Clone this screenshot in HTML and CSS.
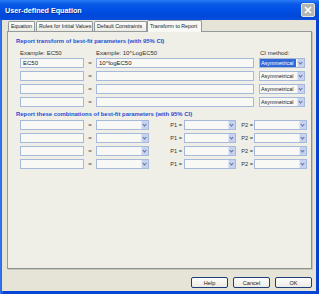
FILE: index.html
```html
<!DOCTYPE html>
<html>
	<head>
		<meta charset="UTF-8">
		<title>User-defined Equation</title>
		<link rel="stylesheet" href="styles.css">
	</head>
	<body>
		<div class="window">
			<div class="titlebar">
				<span class="title">User-defined Equation</span>
				<span class="close">
					<svg width="12" height="12" viewBox="0 0 12 12"><path d="M3 3L9 9M9 3L3 9" stroke="#fff" stroke-width="1.6"/></svg>
				</span>
			</div>
			<div class="client">
				<ul class="tabs">
					<li class="tab">Equation</li>
					<li class="tab">Rules for Initial Values</li>
					<li class="tab">Default Constraints</li>
					<li class="tab active">Transform to Report</li>
				</ul>
				<div class="panel">
					<h2 class="heading">Report transform of best-fit parameters (with 95% CI)</h2>
					<div class="labels">
						<span class="lab-left">Example: EC50</span>
						<span class="lab-mid">Example: 10^LogEC50</span>
						<span class="lab-right">CI method:</span>
					</div>
					<div class="trow">
						<div class="field w-left">EC50</div><span class="eq">=</span><div class="field w-expr">10^logEC50</div>
						<div class="combo w-ci"><span class="val sel">Asymmetrical</span><span class="btn"></span></div>
					</div>
					<div class="trow">
						<div class="field w-left"></div><span class="eq">=</span><div class="field w-expr"></div>
						<div class="combo w-ci"><span class="val">Asymmetrical</span><span class="btn"></span></div>
					</div>
					<div class="trow">
						<div class="field w-left"></div><span class="eq">=</span><div class="field w-expr"></div>
						<div class="combo w-ci"><span class="val">Asymmetrical</span><span class="btn"></span></div>
					</div>
					<div class="trow">
						<div class="field w-left"></div><span class="eq">=</span><div class="field w-expr"></div>
						<div class="combo w-ci"><span class="val">Asymmetrical</span><span class="btn"></span></div>
					</div>

					<h2 class="heading second">Report these combinations of best-fit parameters (with 95% CI)</h2>
					<div class="crow">
						<div class="field w-left"></div><span class="eq">=</span>
						<div class="combo w-fn"><span class="val"></span><span class="btn"></span></div>
						<span class="plab p1">P1 =</span>
						<div class="combo w-p1"><span class="val"></span><span class="btn"></span></div>
						<span class="plab p2">P2 =</span>
						<div class="combo w-p2"><span class="val"></span><span class="btn"></span></div>
					</div>
					<div class="crow">
						<div class="field w-left"></div><span class="eq">=</span>
						<div class="combo w-fn"><span class="val"></span><span class="btn"></span></div>
						<span class="plab p1">P1 =</span>
						<div class="combo w-p1"><span class="val"></span><span class="btn"></span></div>
						<span class="plab p2">P2 =</span>
						<div class="combo w-p2"><span class="val"></span><span class="btn"></span></div>
					</div>
					<div class="crow">
						<div class="field w-left"></div><span class="eq">=</span>
						<div class="combo w-fn"><span class="val"></span><span class="btn"></span></div>
						<span class="plab p1">P1 =</span>
						<div class="combo w-p1"><span class="val"></span><span class="btn"></span></div>
						<span class="plab p2">P2 =</span>
						<div class="combo w-p2"><span class="val"></span><span class="btn"></span></div>
					</div>
					<div class="crow">
						<div class="field w-left"></div><span class="eq">=</span>
						<div class="combo w-fn"><span class="val"></span><span class="btn"></span></div>
						<span class="plab p1">P1 =</span>
						<div class="combo w-p1"><span class="val"></span><span class="btn"></span></div>
						<span class="plab p2">P2 =</span>
						<div class="combo w-p2"><span class="val"></span><span class="btn"></span></div>
					</div>
				</div>
				<div class="buttons">
					<button class="button">Help</button>
					<button class="button">Cancel</button>
					<button class="button">OK</button>
				</div>
			</div>
		</div>
	</body>
</html>
```
FILE: styles.css
```css
* {
	margin: 0;
	padding: 0;
	box-sizing: border-box;
}

body {
	font-family: "Liberation Sans", Arial, sans-serif;
	font-size: 6px;
	color: #222;
	background: #fff;
}

.window {
	width: 319px;
	height: 294px;
	display: flex;
	flex-direction: column;
	background: #0b4fe0;
	background: linear-gradient(to right, #3a7af0 0, #0846d8 4px, #0846d8 315px, #0a3fc8 319px);
}

.titlebar {
	height: 20px;
	display: flex;
	align-items: center;
	justify-content: space-between;
	padding: 0 4px 0 5px;
	background: linear-gradient(#2a7cf8 0, #0a5ae8 4px, #0050e4 10px, #0048da 16px, #0a4ede 20px);
}

.title {
	color: #fff;
	font-weight: bold;
	font-size: 7.2px;
	text-shadow: 1px 1px 0 #0a2a90;
}

.close {
	width: 14px;
	height: 14px;
	border: 1px solid #e6e4e0;
	border-radius: 2px;
	background: #b2b6b4;
	display: flex;
	align-items: center;
	justify-content: center;
}

.client {
	flex: 1;
	margin: 0 3px 3px 2px;
	background: #e6e4d6;
	display: flex;
	flex-direction: column;
	padding: 0 4px 0 5px;
}

ul, li {
	list-style: none;
}

.tabs {
	display: flex;
	align-items: flex-end;
	height: 11px;
	padding-left: 1px;
}

.tab {
	height: 10px;
	line-height: 9px;
	font-size: 5.3px;
	padding: 0 2px;
	border: 1px solid #939a9b;
	border-bottom: none;
	border-radius: 2px 2px 0 0;
	background: linear-gradient(#fcfcfb, #ecebe4);
	margin-right: 1px;
	color: #222;
	white-space: nowrap;
}

.tab:nth-child(1) { width: 27px; }
.tab:nth-child(2) { width: 57px; }
.tab:nth-child(3) { width: 53px; }

.tab.active {
	width: 55px;
	height: 12px;
	line-height: 10px;
	margin-left: -1px;
	margin-bottom: -1px;
	background: #f8f8f4;
	position: relative;
	z-index: 1;
}

.panel {
	width: 305px;
	height: 238px;
	border: 1px solid #939a9b;
	border-right-color: #8c9292;
	border-bottom-color: #8c9292;
	background: #efeee7;
	padding: 5px 0 0 8px;
	box-shadow: 1px 1px 0 #c8c6bb;
}

.heading {
	font-size: 5.9px;
	font-weight: bold;
	color: #1f4fd3;
	height: 8px;
	line-height: 8px;
	white-space: nowrap;
}

.heading.second {
	margin-top: 3px;
}

.labels {
	display: flex;
	height: 10px;
	align-items: center;
	padding-left: 4px;
	margin-top: 3px;
	color: #333;
}

.lab-left { width: 76px; }
.lab-mid { width: 164px; }

.trow, .crow {
	display: flex;
	align-items: center;
	height: 10px;
	margin-bottom: 3px;
	padding-left: 4px;
}

.field {
	height: 10px;
	border: 1px solid #a7b9da;
	background: #f8f8f5;
	line-height: 8px;
	padding-left: 2px;
	color: #222;
	white-space: nowrap;
}

.w-left { width: 64px; }
.w-expr { width: 158px; }

.eq {
	width: 12px;
	text-align: center;
	font-weight: bold;
	color: #555;
}

.combo {
	height: 10px;
	display: flex;
	border: 1px solid #a7b9da;
	background: #f8f8f5;
}

.combo .val {
	flex: 1;
	font-size: 5.4px;
	line-height: 8px;
	padding-left: 1px;
	white-space: nowrap;
	color: #222;
}

.combo .val.sel {
	background: #3168d5;
	color: #fff;
	margin: 0 1px 0 0;
}

.combo .btn {
	width: 7px;
	flex: none;
	background: #c6d2f0;
	border-left: 1px solid #dfe6f6;
	position: relative;
}

.combo .btn::after {
	content: "";
	position: absolute;
	left: 1px;
	top: 2px;
	width: 2px;
	height: 2px;
	border-right: 1px solid #5d6f9e;
	border-bottom: 1px solid #5d6f9e;
	transform: rotate(45deg);
}

.w-ci { width: 46px; margin-left: 5px; }
.w-fn { width: 53px; }
.w-p1 { width: 52px; }
.w-p2 { width: 53px; }

.plab {
	font-size: 5.6px;
	color: #333;
	white-space: nowrap;
}

.p1 {
	width: 35px;
	text-align: right;
	padding-right: 2px;
}

.p2 {
	width: 18px;
	text-align: right;
	padding-right: 1px;
}

.heading.second + .crow {
	margin-top: 2px;
}

.buttons {
	display: flex;
	justify-content: flex-end;
	gap: 5px;
	margin-top: 8px;
}

.button {
	width: 37px;
	height: 11px;
	font-family: "Liberation Sans", Arial, sans-serif;
	font-size: 5.6px;
	color: #222;
	border: 1px solid #1f3d7a;
	border-radius: 2px;
	background: linear-gradient(#fdfdfb, #ecebe5);
}
```
